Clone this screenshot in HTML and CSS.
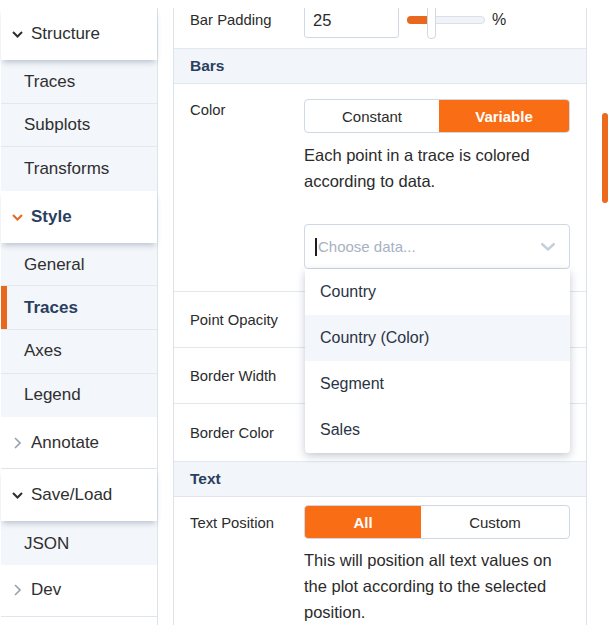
FILE: index.html
```html
<!DOCTYPE html>
<html>
<head>
<meta charset="utf-8">
<link rel="stylesheet" href="styles.css">
</head>
<body>
<div class="app">
  <nav class="side">
    <div class="side-h open">
      <svg class="chev-d" width="11" height="7" viewBox="0 0 11 7"><polyline points="1,1 5.5,5.5 10,1" fill="none" stroke="#2f2f2f" stroke-width="2"/></svg>
      <span>Structure</span>
    </div>
    <div class="sub">
      <div class="sub-item">Traces</div>
      <div class="sub-item">Subplots</div>
      <div class="sub-item">Transforms</div>
    </div>
    <div class="side-h open">
      <svg class="chev-d" width="11" height="7" viewBox="0 0 11 7"><polyline points="1,1 5.5,5.5 10,1" fill="none" stroke="#e8691d" stroke-width="2"/></svg>
      <span class="bold">Style</span>
    </div>
    <div class="sub">
      <div class="sub-item">General</div>
      <div class="sub-item active">Traces</div>
      <div class="sub-item">Axes</div>
      <div class="sub-item">Legend</div>
    </div>
    <div class="side-h closed">
      <svg class="chev-r" width="7" height="12" viewBox="0 0 7 12"><polyline points="1,1 6,6 1,11" fill="none" stroke="#9aa3ad" stroke-width="1.6"/></svg>
      <span>Annotate</span>
    </div>
    <div class="side-h open">
      <svg class="chev-d" width="11" height="7" viewBox="0 0 11 7"><polyline points="1,1 5.5,5.5 10,1" fill="none" stroke="#2f2f2f" stroke-width="2"/></svg>
      <span>Save/Load</span>
    </div>
    <div class="sub">
      <div class="sub-item">JSON</div>
    </div>
    <div class="side-h closed">
      <svg class="chev-r" width="7" height="12" viewBox="0 0 7 12"><polyline points="1,1 6,6 1,11" fill="none" stroke="#9aa3ad" stroke-width="1.6"/></svg>
      <span>Dev</span>
    </div>
  </nav>

  <main class="main">
    <div class="rows">
      <div class="row row-pad">
        <div class="lbl">Bar Padding</div>
        <div class="ctl inline">
          <div class="num">25</div>
          <div class="slider">
            <div class="track"></div>
            <div class="fill"></div>
            <div class="thumb"></div>
          </div>
          <span class="unit">%</span>
        </div>
      </div>

      <div class="sec">Bars</div>

      <div class="row row-color">
        <div class="lbl lbl-top">Color</div>
        <div class="ctl">
          <div class="toggle">
            <div class="opt opt-const">Constant</div>
            <div class="opt opt-var on">Variable</div>
          </div>
          <p class="desc">Each point in a trace is colored according to data.</p>
          <div class="dd">
            <div class="dd-box">
              <span class="caret"></span>
              <span class="ph">Choose data...</span>
              <svg class="dd-chev" width="16" height="9" viewBox="0 0 16 9"><polyline points="1.5,1.5 8,7.5 14.5,1.5" fill="none" stroke="#c5cfdc" stroke-width="2.4"/></svg>
            </div>
            <div class="menu">
              <div class="mi">Country</div>
              <div class="mi hl">Country (Color)</div>
              <div class="mi">Segment</div>
              <div class="mi">Sales</div>
            </div>
          </div>
        </div>
      </div>

      <div class="row row-std">
        <div class="lbl">Point Opacity</div>
      </div>
      <div class="row row-std">
        <div class="lbl">Border Width</div>
      </div>
      <div class="row row-std2">
        <div class="lbl">Border Color</div>
      </div>

      <div class="sec">Text</div>

      <div class="row row-text">
        <div class="lbl lbl-top2">Text Position</div>
        <div class="ctl">
          <div class="toggle toggle2">
            <div class="opt opt-all on">All</div>
            <div class="opt opt-custom">Custom</div>
          </div>
          <p class="desc">This will position all text values on the plot according to the selected position.</p>
        </div>
      </div>
    </div>
  </main>

  <div class="scroll">
    <div class="thumb-bar"></div>
  </div>
</div>
</body>
</html>
```

FILE: styles.css
```css
* { box-sizing: border-box; }

body {
  margin: 0;
  font-family: "Liberation Sans", Arial, sans-serif;
  color: #2b2b2b;
  background: #fff;
}

.app {
  display: flex;
  margin-top: 8px;
  height: 617px;
  overflow: hidden;
}

/* ---------- sidebar ---------- */
.side {
  flex: none;
  width: 158px;
  border-right: 1px solid #dde3eb;
  padding-left: 1px;
}

.side-h {
  height: 52px;
  display: flex;
  align-items: center;
  padding-left: 11px;
  font-size: 17px;
  color: #2f2f2f;
  background: #fff;
}

.side-h.open {
  position: relative;
  z-index: 1;
  box-shadow: 0 4px 6px -2px rgba(42, 63, 95, 0.3);
}

.side-h.closed {
  border-bottom: 1px solid #e1e6ee;
}

.chev-d { margin-right: 8px; margin-top: 1px; }
.chev-r { margin-left: 2px; margin-right: 10px; }

.bold {
  font-weight: bold;
  color: #2a3f5f;
}

.sub {
  background: #f3f6fa;
}

.sub-item {
  height: 43.6px;
  display: flex;
  align-items: center;
  padding-left: 23px;
  font-size: 17px;
  color: #2f2f2f;
  border-bottom: 1px solid #e3e8ef;
}

.sub-item:first-child { padding-top: 2px; }
.sub-item:last-child { border-bottom: none; }

.sub-item.active {
  font-weight: bold;
  color: #2a3f5f;
  box-shadow: inset 6px 0 0 #e8691d;
}

/* ---------- main panel ---------- */
.main {
  flex: none;
  width: 414px;
  margin-left: 15px;
  border-left: 1px solid #dde3eb;
  border-right: 1px solid #dde3eb;
  overflow: hidden;
}

.rows {
  margin-top: -16px;
}

.row {
  display: flex;
  padding: 0 16px;
  border-bottom: 1px solid #e3e8ef;
}

.lbl {
  flex: none;
  width: 114px;
  font-size: 14.8px;
  line-height: 20px;
  color: #2b2b2b;
}

.ctl {
  flex: 1;
  min-width: 0;
}

.row-pad {
  height: 57px;
  align-items: center;
}

.inline {
  display: flex;
  align-items: center;
}

.num {
  width: 95px;
  height: 35px;
  border: 1px solid #cfd8e4;
  border-radius: 3px;
  padding-left: 8px;
  font-size: 16.5px;
  line-height: 33px;
  color: #2b2b2b;
}

.slider {
  position: relative;
  width: 78px;
  height: 8px;
  margin-left: 8px;
}

.track {
  height: 8px;
  border-radius: 4px;
  background: #f0f3f8;
  border: 1px solid #d9e0ea;
}

.fill {
  position: absolute;
  left: 0;
  top: 0;
  width: 23px;
  height: 8px;
  border-radius: 4px;
  background: #e8691d;
}

.thumb {
  position: absolute;
  left: 20px;
  top: -14px;
  width: 9px;
  height: 37px;
  background: #fff;
  border: 1px solid #cfd8e4;
  border-radius: 4px;
}

.unit {
  margin-left: 7px;
  font-size: 16px;
  color: #2b2b2b;
}

.sec {
  height: 35px;
  display: flex;
  align-items: center;
  padding-left: 16px;
  background: #f2f5f9;
  border-bottom: 1px solid #e1e6ee;
  font-size: 15.5px;
  font-weight: bold;
  color: #2a3f5f;
}

.row-color {
  height: 208px;
  padding-top: 15px;
}

.lbl-top { margin-top: 1px; }

.toggle {
  display: flex;
  height: 34px;
  border: 1px solid #cfd8e4;
  border-radius: 4px;
  overflow: hidden;
}

.opt {
  display: flex;
  align-items: center;
  justify-content: center;
  font-size: 15px;
  color: #2b2b2b;
}

.opt.on {
  background: #f96d14;
  color: #fff;
  font-weight: bold;
}

.opt-const { width: 134px; }
.opt-var { flex: 1; }
.opt-all { width: 116px; }
.opt-custom { flex: 1; }

.desc {
  margin: 9px 0 0;
  font-size: 16.5px;
  line-height: 26px;
  color: #2b2b2b;
}

.dd {
  position: relative;
  margin-top: 30px;
}

.dd-box {
  height: 45px;
  border: 1px solid #cfd8e4;
  border-radius: 4px;
  display: flex;
  align-items: center;
  padding-left: 10px;
  padding-right: 13px;
}

.caret {
  width: 2px;
  height: 18px;
  background: #1d1d1d;
}

.ph {
  flex: 1;
  margin-left: 1px;
  font-size: 15px;
  color: #a7b2c1;
}

.menu {
  position: absolute;
  top: 100%;
  left: 1px;
  right: 0;
  z-index: 5;
  background: #fff;
  border-radius: 0 0 4px 4px;
  box-shadow: 0 3px 9px rgba(42, 63, 95, 0.28);
}

.mi {
  height: 46px;
  display: flex;
  align-items: center;
  padding-left: 15px;
  font-size: 16px;
  color: #2a3445;
}

.mi.hl { background: #f3f6fa; }

.row-std {
  height: 56px;
  align-items: center;
}

.row-std2 {
  height: 58px;
  align-items: center;
}

.row-text {
  padding-top: 8px;
  padding-bottom: 20px;
  border-bottom: none;
}

.row-text .desc { margin-top: 8px; }

.lbl-top2 { margin-top: 8px; }

/* ---------- scrollbar ---------- */
.scroll {
  flex: none;
  width: 6px;
  margin-left: 15px;
}

.thumb-bar {
  margin-top: 105px;
  height: 90px;
  border-radius: 3px;
  background: #ec6a1d;
}
```
